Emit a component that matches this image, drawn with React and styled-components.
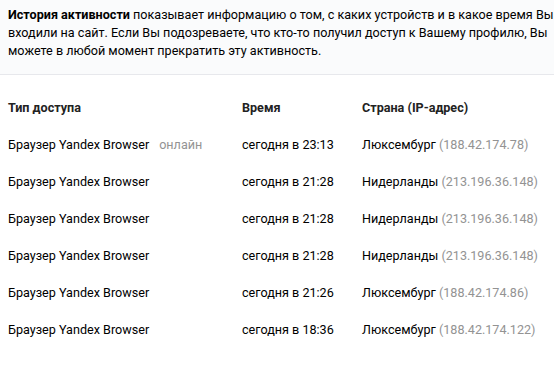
import React from 'react';
import styled, { createGlobalStyle } from 'styled-components';

const GlobalStyle = createGlobalStyle`
  body {
    margin: 0;
    background: #fff;
    font-family: Roboto, "Noto Sans", Arial, sans-serif;
    font-size: 12.6px;
    color: #000;
  }
`;

const sessions = [
  { time: 'сегодня в 23:13', country: 'Люксембург', ip: '188.42.174.78', online: true },
  { time: 'сегодня в 21:28', country: 'Нидерланды', ip: '213.196.36.148' },
  { time: 'сегодня в 21:28', country: 'Нидерланды', ip: '213.196.36.148' },
  { time: 'сегодня в 21:28', country: 'Нидерланды', ip: '213.196.36.148' },
  { time: 'сегодня в 21:26', country: 'Люксембург', ip: '188.42.174.86' },
  { time: 'сегодня в 18:36', country: 'Люксембург', ip: '188.42.174.122' },
];

export default function App() {
  return (
    <Page>
      <GlobalStyle />
      <Intro>
        <b>История активности</b> показывает информацию о том, с каких устройств и в
        какое время Вы входили на сайт. Если Вы подозреваете, что кто-то получил доступ к
        Вашему профилю, Вы можете в любой момент прекратить эту активность.
      </Intro>
      <Table>
        <Row>
          <Head>Тип доступа</Head>
          <Head>Время</Head>
          <Head>Страна (IP-адрес)</Head>
        </Row>
        {sessions.map((s, i) => (
          <Row key={i}>
            <Cell>
              Браузер Yandex Browser
              {s.online && <Muted $gap>онлайн</Muted>}
            </Cell>
            <Cell>{s.time}</Cell>
            <Cell>
              {s.country} <Muted>({s.ip})</Muted>
            </Cell>
          </Row>
        ))}
      </Table>
    </Page>
  );
}

const Page = styled.div`
  width: 554px;
`;

const Intro = styled.p`
  margin: 0;
  padding: 6px 0 14px 8px;
  line-height: 18px;
  color: #000;
  background: #fafbfc;
  border-bottom: 1px solid #e7e8ec;
`;

const Table = styled.div`
  display: flex;
  flex-direction: column;
  padding-top: 14px;
`;

const Row = styled.div`
  display: grid;
  grid-template-columns: 234px 120px 1fr;
  align-items: center;
  height: 37px;
  padding-left: 8px;
`;

const Head = styled.div`
  font-weight: bold;
  color: #222;
`;

const Cell = styled.div`
  white-space: nowrap;
  color: #000;
`;

const Muted = styled.span`
  color: #939393;
  margin-left: ${(p) => (p.$gap ? '10px' : '0')};
`;
